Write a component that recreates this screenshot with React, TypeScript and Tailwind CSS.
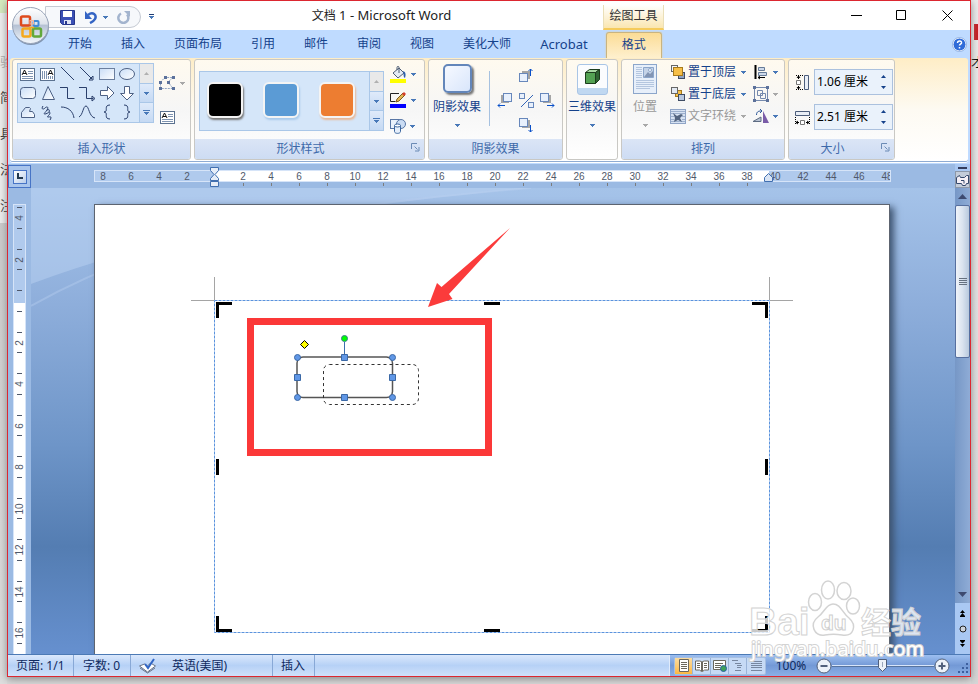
import React, { useState } from "react";
import clsx from "clsx";

const tabs = ["开始", "插入", "页面布局", "引用", "邮件", "审阅", "视图", "美化大师"];

const shapes: { name: string; node: React.ReactNode }[] = [
  { name: "文本框", node: <LinedBox /> },
  { name: "竖排文本框", node: <LinedBox vertical /> },
  { name: "直线", node: <path d="M2 2l13 13" /> },
  { name: "箭头", node: <path d="M2 2l12 12M15 11v4h-4z" /> },
  { name: "矩形", node: <rect x="1.5" y="3.5" width="15" height="11" fill="url(#shapeFill)" stroke="#6b7f9f" /> },
  { name: "椭圆", node: <ellipse cx="9" cy="9" rx="7.5" ry="5.5" fill="url(#shapeFill)" stroke="#4d6185" /> },
  { name: "圆角矩形", node: <rect x="1.5" y="3.5" width="15" height="11" rx="3" fill="url(#shapeFill)" stroke="#4d6185" /> },
  { name: "三角形", node: <path d="M9 2.5L3.5 15.500h12z" fill="url(#shapeFill)" stroke="#4d6185" /> },
  { name: "肘形连接符", node: <path d="M1 3.500h7.500v11h7" /> },
  { name: "肘形箭头", node: <path d="M1 3.500h7.500v11h7M14 12l3 2.500l-3 2.500z" /> },
  { name: "右箭头", node: <path d="M2.500 6.500h7v-4l6.500 6.500l-6.500 6.500v-4h-7z" fill="#fff" stroke="#4d6185" /> },
  { name: "下箭头", node: <path d="M6.500 2.500v7h-4l6.500 6.500l6.500-6.500h-4v-7z" fill="#fff" stroke="#4d6185" /> },
  { name: "任意多边形", node: <path d="M2.500 14.500v-5l4-5h4l1 1l-1 3h3l2 3v3z" fill="url(#shapeFill)" stroke="#4d6185" /> },
  { name: "自由曲线", node: <path d="M4 3c-2 3 0 4 2 2s4-1 2 2s-4 4-2 4s5-3 5-1s-4 4-2 4s3-1 3 1l-1 2M8 7c2-1 3 0 2 2" /> },
  { name: "弧形", node: <path d="M2 4c7 0 12 4 13 11" /> },
  { name: "曲线", node: <path d="M1 14C5 12 5 3 8 3s3 11 9 12" /> },
  { name: "左大括号", node: <path d="M12 2c-7 0-1 7-6 7c5 0-1 7 6 7" /> },
  { name: "右大括号", node: <path d="M6 2c7 0 1 7 6 7c-5 0 1 7-6 7" /> },
];

const swatches = [
  { name: "黑色", color: "bg-black", shadow: "shadow-[1px_2px_2px_#777]" },
  { name: "蓝色", color: "bg-[#5b9bd5]", shadow: "shadow-[1px_2px_2px_#a9cbec]" },
  { name: "橙色", color: "bg-[#ed7d31]", shadow: "shadow-[1px_2px_2px_#e8b999]" },
];

function LinedBox({ vertical }: { vertical?: boolean }) {
  return (
    <>
      <rect x="1.500" y="3.500" width="14" height="12" fill="#fff" stroke="#5b7290" />
      {vertical ? (
        <>
          <path d="M3.500 6v8M5.500 6v8M7.500 6v8M9.500 11v3M11.500 11v3M13.500 11v3" stroke="#7e93b0" />
          <path d="M9 10l2.500-5l2.500 5M10 8.500h3" stroke="#111" />
        </>
      ) : (
        <>
          <path d="M9 6.500h5M9 8.500h5M3 11.500h11M3 13.500h11" stroke="#7e93b0" />
          <path d="M3 10l2.500-5l2.500 5M4 8.500h3" stroke="#111" />
        </>
      )}
    </>
  );
}

const Icon = ({ size = 16, children }: { size?: number; children: React.ReactNode }) => (
  <svg width={size} height={size} viewBox={`0 0 ${size} ${size}`} fill="none" stroke="#2a3f6b" className="shrink-0">
    {children}
  </svg>
);

const Caret = ({ off }: { off?: boolean }) => (
  <svg width="5" height="3" viewBox="0 0 5 3" shapeRendering="crispEdges" className={clsx("shrink-0", off ? "fill-[#a8a8a8]" : "fill-[#4878b8]")}>
    <path d="M0 0h5v1H4v1H3v1H2V2H1V1H0z" />
  </svg>
);

const Group = ({
  title,
  className,
  launcher,
  children,
}: {
  title?: string;
  className: string;
  launcher?: boolean;
  children: React.ReactNode;
}) => (
  <section
    className={clsx(
      "flex h-[101px] shrink-0 flex-col overflow-hidden rounded-[3px] border border-[#c9c8c4] bg-linear-to-b from-[#fffaef] via-[#f6f6f6] to-white",
      className
    )}
  >
    <div className="flex flex-1">{children}</div>
    {title && (
      <div
        className={clsx(
          "relative flex h-5 items-center justify-center bg-linear-to-b from-[#dbe5f6] to-[#cddcf3] text-[#3e6aaa]",
          launcher && "pr-[18px]"
        )}
      >
        {title}
        {launcher && (
          <button aria-label={`${title}选项`} className="absolute top-1 right-1">
            <svg width="9" height="9" viewBox="0 0 9 9" fill="none" stroke="#6b8bb5" className="block">
              <path d="M.5 6V.5H6M3.500 3.500l3 3M8 4v4H4" />
            </svg>
          </button>
        )}
      </div>
    )}
  </section>
);

const GalleryScroll = () => (
  <div className="flex w-[14px] flex-col divide-y divide-[#aac7e8] border-l border-[#aac7e8]">
    <button aria-label="上一行" className="flex flex-1 items-center justify-center bg-[#e9e9e9]">
      <svg width="5" height="3" fill="#b0b0b0"><path d="M0 3h5L2.500 0z" /></svg>
    </button>
    <button aria-label="下一行" className="flex flex-1 items-center justify-center bg-linear-to-b from-[#dfeafa] to-[#c5d9f3]">
      <Caret />
    </button>
    <button aria-label="其他" className="flex flex-1 flex-col items-center justify-center gap-px bg-linear-to-b from-[#dfeafa] to-[#c5d9f3]">
      <span className="h-px w-[7px] bg-[#4878b8]" />
      <Caret />
    </button>
  </div>
);

const SplitButton = ({ label, off, text, children }: { label: string; off?: boolean; text?: boolean; children: React.ReactNode }) => (
  <button aria-label={label} className="flex items-center">
    {children}
    {text && <span className={clsx("ml-[2px] mr-[5px]", off ? "text-[#999]" : "text-[#15428b]")}>{label}</span>}
    {!text && <span className="w-1" />}
    <Caret off={off} />
  </button>
);

const Nudge = ({ label, turn }: { label: string; turn: "up" | "down" | "left" | "right" }) => {
  const arrow = {
    up: "M12.500 9V2M10.500 4l2-2l2 2",
    down: "M12.500 8v7M10.500 13l2 2l2-2",
    left: "M8 13.500H1M3 11.500l-2 2l2 2",
    right: "M8 13.500h7M13 11.500l2 2l-2 2",
  }[turn];
  const x = turn === "left" ? 6 : 1;
  const y = turn === "up" ? 6 : 1;
  return (
    <button aria-label={label}>
      <Icon>
        <rect x={turn === "left" ? x - 2 : x + 3} y={turn === "up" ? y - 2 : y + 2} width="8" height="8" fill="#a5a5a5" stroke="none" />
        <rect x={x + 0.5} y={y + 0.5} width="8" height="8" fill="#e8f0fc" stroke="#6787bb" />
        <path d={arrow} stroke="#0a50c8" />
      </Icon>
    </button>
  );
};

const SizeField = ({ id, label, value, onChange, children }: { id: string; label: string; value: string; onChange: (v: string) => void; children: React.ReactNode }) => (
  <div className="flex items-center gap-[3px]">
    <label htmlFor={id} aria-label={label}>{children}</label>
    <div className="flex h-[26px] w-[79px] items-center border border-[#abc1de] bg-[#eaf2fb] pr-[6px]">
      <input id={id} value={value} onChange={(e) => onChange(e.target.value)} className="w-full min-w-0 bg-transparent pl-[2px] text-black outline-none" />
      <div className="flex flex-col gap-2 text-[#15428b]">
        <button aria-label={`增加${label}`}><svg width="5" height="3" fill="currentColor" className="block"><path d="M0 3h5L2.500 0z" /></svg></button>
        <button aria-label={`减小${label}`}><svg width="5" height="3" fill="currentColor" className="block"><path d="M0 0h5L2.500 3z" /></svg></button>
      </div>
    </div>
  </div>
);

const TitleBar = () => (
  <header className="relative flex h-[29px] shrink-0 bg-white">
    <div className="w-[152px] pt-[5px] pl-[37px]">
      <div className="flex h-[22px] w-[96px] items-center gap-[9px] rounded-r-full border border-[#c5cad3] bg-[#f6f8fb] pl-[14px]">
        <button aria-label="保存">
          <Icon size={15}>
            <path d="M.5.5h14v14h-12l-2-2z" fill="#3b50b5" stroke="#27378c" />
            <path d="M3 1h9v6H3z" fill="#fff" stroke="none" />
            <path d="M4 10h7v4H4z" fill="#dfe4f5" stroke="none" />
            <path d="M5 11h2v3H5z" fill="#27378c" stroke="none" />
          </Icon>
        </button>
        <button aria-label="撤消" className="flex items-center gap-[5px]">
          <Icon size={14}>
            <path d="M4 5c5-4 9 0 7 4c-1 2-3 3-5 4" stroke="#3464c4" strokeWidth="2.500" />
            <path d="M1 1v8h7z" fill="#3464c4" stroke="none" />
          </Icon>
          <Caret />
        </button>
        <button aria-label="恢复">
          <Icon size={14}>
            <path d="M4 3.500a5 5 0 1 0 6 1" stroke="#a3b4ce" strokeWidth="2.500" />
            <path d="M7 1h6v6z" fill="#a3b4ce" stroke="none" />
          </Icon>
        </button>
      </div>
      <button aria-label="自定义快速访问工具栏" className="absolute top-[13px] left-[141px] flex flex-col items-center gap-px">
        <span className="h-px w-[5px] bg-[#1f3c74]" />
        <Caret />
      </button>
    </div>
    <h1 className="w-[443px] pt-[2px] text-center text-[13px] leading-6 text-[#222]">
      <span className="text-[12px]">文档</span> 1 - Microsoft Word
    </h1>
    <div className="mt-1 w-[61px] border-x border-b-2 border-x-[#eadfb8] border-b-[#f5cb5c] bg-linear-to-b from-white to-[#fae6b0] text-center leading-[22px] text-[#333]">
      绘图工具
    </div>
    <div className="flex-1" />
    <div className="flex">
      <button aria-label="最小化" className="grid w-[46px] place-items-center"><Icon size={11}><path d="M0 5.500h11" stroke="#000" /></Icon></button>
      <button aria-label="最大化" className="grid w-[45px] place-items-center"><Icon size={11}><path d="M.5.5h9v9h-9z" stroke="#000" /></Icon></button>
      <button aria-label="关闭" className="grid w-[46px] place-items-center"><Icon size={11}><path d="M.5.5l10 10M10.500.5l-10 10" stroke="#000" /></Icon></button>
    </div>
    <button aria-label="Office 按钮" className="absolute top-[5px] left-1 z-10">
      <svg width="38" height="40" viewBox="0 0 38 40" fill="none">
        <defs>
          <linearGradient id="orb" x1="0" y1="0" x2="0" y2="1">
            <stop offset="0" stopColor="#fff" />
            <stop offset=".45" stopColor="#dfe4ec" />
            <stop offset=".5" stopColor="#b6c2d4" />
            <stop offset="1" stopColor="#f4f8fd" />
          </linearGradient>
        </defs>
        <circle cx="19" cy="21" r="18" fill="#4d5a70" opacity=".55" />
        <circle cx="18.500" cy="19.500" r="18" fill="url(#orb)" stroke="#97a3b8" />
        <rect x="9" y="10.500" width="9" height="9" rx="1.500" stroke="#df4a1c" strokeWidth="2.500" />
        <rect x="21.500" y="15" width="5" height="5" rx="1" stroke="#3f8bd8" strokeWidth="2" />
        <rect x="10.500" y="22.500" width="8" height="8" rx="1.500" stroke="#f5a81c" strokeWidth="2.500" />
        <rect x="21" y="22.500" width="8" height="8" rx="1.500" stroke="#62a83a" strokeWidth="2.500" />
        <rect x="18" y="14.500" width="3.500" height="3.500" stroke="#f2b59c" />
        <path d="M17 21.500h5" stroke="#f5a81c" strokeWidth="1.500" />
      </svg>
    </button>
  </header>
);

const Tabs = () => (
  <nav className="flex h-7 shrink-0 bg-[#bfdbff] pl-[60px] text-[#15428b]">
    <div className="flex items-center gap-[29px]">
      {tabs.map((tab) => (
        <button key={tab}>{tab}</button>
      ))}
      <button className="text-[13px]">Acrobat</button>
    </div>
    <button className="mt-[2px] ml-[18px] w-[56px] rounded-t-[3px] border border-b-0 border-[#c9b480] bg-linear-to-b from-[#fbdc95] to-[#fef0ce] pb-[2px] shadow-[0_0_2px_#e7cf8c]">格式</button>
    <button aria-label="帮助" className="mr-[3px] ml-auto">
      <svg width="15" height="15" viewBox="0 0 15 15">
        <circle cx="7.500" cy="7.500" r="6.500" fill="#2f6bd8" stroke="#fff" />
        <circle cx="7.500" cy="7.500" r="7" fill="none" stroke="#7c9fd6" strokeWidth=".7" />
        <path d="M5.500 6c0-3 4.500-2.500 4 0c-.3 1.200-2 1-2 2.500M7.500 10v1.500" fill="none" stroke="#fff" strokeWidth="1.500" />
      </svg>
    </button>
  </nav>
);

const StackIcon = ({ back }: { back?: boolean }) => (
  <Icon>
    <rect x="1.500" y="1.500" width="6" height="6" fill="#f5f7fa" stroke="#666" />
    <rect x="8.500" y="8.500" width="6" height="6" fill="#8fa2c2" stroke="#3f4c63" />
    {back ? (
      <>
        <rect x="5.500" y="4.500" width="6" height="6" fill="#f6bf47" stroke="#a77a1b" />
        <rect x="1.500" y="1.500" width="6" height="6" fill="#e3e9f2" stroke="#666" />
        <rect x="8.500" y="8.500" width="6" height="6" fill="#b9c8df" stroke="#3f4c63" />
      </>
    ) : (
      <rect x="3.500" y="3.500" width="9" height="8" fill="#f6bf47" stroke="#a77a1b" />
    )}
  </Icon>
);

const Ribbon = () => {
  const [height, setHeight] = useState("1.06 厘米");
  const [width, setWidth] = useState("2.51 厘米");

  return (
    <div className="shrink-0 bg-[#bfdbff] px-[2px] pb-[2px]">
      <div className="flex h-[104px] gap-[3px] overflow-hidden rounded-[3px] border-b border-[#8fabd2] bg-linear-to-b from-[#feedc6] via-[#fdfaf2] to-white pt-[1px] pl-[2px] shadow-[0_1px_0_#fff]">
        <Group title="插入形状" className="w-[179px]">
          <div className="mt-[3px] ml-1 flex h-[60px] w-[137px] border border-[#aac7e8] bg-[#d5e6f9]">
            <div className="grid flex-1 grid-cols-6 grid-rows-3 place-items-center pr-[2px]">
              {shapes.map((s) => (
                <button key={s.name} aria-label={s.name}>
                  <Icon size={18}>{s.node}</Icon>
                </button>
              ))}
            </div>
            <GalleryScroll />
          </div>
          <div className="mt-[15px] ml-[5px] flex flex-col gap-4">
            <SplitButton label="编辑形状" off>
              <Icon size={17}>
                <path d="M1.500 13.500V7L6 2.500h8L9 7l5 6.500z" stroke="#8fa3c2" strokeDasharray="2 1" />
                <path d="M0 12h3v3H0zM0 6h3v3H0zM5 1h3v3H5zM13 1h3v3h-3zM8 6h3v3H8zM13 12h3v3h-3z" fill="#5b719b" stroke="none" />
              </Icon>
            </SplitButton>
            <button aria-label="编辑文本"><Icon size={17}><LinedBox /></Icon></button>
          </div>
        </Group>

        <Group title="形状样式" className="w-[231px]" launcher>
          <div className="mt-[11px] ml-1 flex h-[60px] w-[185px] border border-[#aac7e8] bg-[#d5e6f9]">
            <div className="flex flex-1 items-center gap-5 pb-[2px] pl-[7px]">
              {swatches.map((s) => (
                <button key={s.name} aria-label={s.name} className={clsx("size-9 rounded-md border-2 border-[#f4f4f4]", s.color, s.shadow)} />
              ))}
            </div>
            <GalleryScroll />
          </div>
          <div className="mt-[6px] ml-[6px] flex flex-col gap-[9px]">
            <SplitButton label="形状填充">
              <Icon size={17}>
                <path d="M3 7l6-5l5 5l-6 5z" fill="#e4ebf4" stroke="#4d5c74" />
                <path d="M9 7V1.500c0-1.500-2-1.500-2 0V4" stroke="#4d5c74" />
                <path d="M13 5c3 1 3 4 2 7c-2-1-1-4-2-7z" fill="#2f62ad" stroke="none" />
                <path d="M0 13h16v4H0z" fill="#ff0" stroke="none" />
              </Icon>
            </SplitButton>
            <SplitButton label="形状轮廓">
              <Icon size={17}>
                <path d="M9 1.500H.5v8h5" stroke="#222" />
                <path d="M6 10l1-3l6-6l2 2l-6 6z" fill="#e2b653" stroke="#7d5c20" />
                <path d="M12 2l2-2l2 2l-2 2z" fill="#d53d2b" stroke="none" />
                <path d="M0 12h16v4H0z" fill="#00f" stroke="none" />
              </Icon>
            </SplitButton>
            <SplitButton label="更改形状">
              <Icon size={16}>
                <rect x=".5" y="1.500" width="9" height="9" fill="#eaf2fc" stroke="#5876a5" />
                <circle cx="11" cy="6" r="4.500" fill="#cadcf4" stroke="#5876a5" />
                <path d="M4.500 7.500v6c0 2.500 6 2.500 6 0v-6" fill="#e6effb" stroke="#3a659e" />
                <ellipse cx="7.500" cy="7.500" rx="3" ry="1.500" fill="#fff" stroke="#3a659e" />
              </Icon>
            </SplitButton>
          </div>
        </Group>

        <Group title="阴影效果" className="w-[135px]">
          <button className="flex w-14 flex-col items-center pt-[4px] text-[#15428b]">
            <span className="size-[29px] rounded-[5px] border-2 border-[#6386ba] bg-linear-to-br from-[#f6f9ff] to-[#d9e6fb] shadow-[2px_2px_2px_#777]" />
            <span className="mt-[5px] mb-2 leading-[18px] whitespace-nowrap">阴影效果</span>
            <Caret />
          </button>
          <span className="mt-[11px] ml-1 h-[55px] w-px bg-[#a6c1e0]" />
          <div className="mt-[7px] ml-[7px] grid h-[66px] grid-cols-3 content-between gap-x-[5px]">
            <span />
            <Nudge label="略向上移" turn="up" />
            <span />
            <Nudge label="略向左移" turn="left" />
            <button aria-label="设置/取消阴影">
              <Icon>
                <rect x="1.500" y="1.500" width="5" height="5" fill="#e8f0fc" stroke="#6787bb" />
                <rect x="10.500" y="10.500" width="5" height="5" fill="#e8f0fc" stroke="#6787bb" />
                <path d="M15 3L3 15" stroke="#3466b8" />
              </Icon>
            </button>
            <Nudge label="略向右移" turn="right" />
            <span />
            <Nudge label="略向下移" turn="down" />
          </div>
        </Group>

        <Group className="w-[52px]">
          <button className="flex w-full flex-col items-center pt-[4px] text-[#15428b]">
            <span className="grid h-[31px] w-[31px] justify-center rounded-[3px] border border-[#a9c5e6] bg-[linear-gradient(#fbfcfe_23px,#c0d8f1_23px)] pt-1">
              <svg width="15" height="15" viewBox="0 0 15 15" stroke="#1c3d1d">
                <path d="M.5 3.500h10v11H.5z" fill="#53a253" />
                <path d="M.5 3.500l4-3h10l-4 3z" fill="#a7d9a3" />
                <path d="M10.500 3.500l4-3v10l-4 4z" fill="#2d6531" />
              </svg>
            </span>
            <span className="mt-[3px] mb-2 leading-[18px] whitespace-nowrap">三维效果</span>
            <Caret />
          </button>
        </Group>

        <Group title="排列" className="w-[164px]">
          <button className="flex w-[46px] flex-col items-center pt-[4px] text-[#999]">
            <svg width="24" height="30" viewBox="0 0 24 30" fill="none" stroke="#8ca6cb">
              <rect x=".5" y=".5" width="23" height="29" fill="#e7effa" />
              <path d="M3 3.500h6M3 5.500h6M3 7.500h6M3 9.500h6M3 11.500h6M3 13.500h6M3 16.500h18M3 18.500h18M3 20.500h18M3 22.500h18M3 24.500h14" stroke="#b4c6df" />
              <path d="M10.500 3.500h10v10h-10z" fill="#c4d3e8" />
              <path d="M11 13l4-5l2 2l3-3v6z" fill="#8295b4" stroke="none" />
              <circle cx="17" cy="6" r="1.500" fill="#fff" />
            </svg>
            <span className="mt-1 mb-2 leading-[18px]">位置</span>
            <Caret off />
          </button>
          <div className="mt-[4px] ml-[2px] flex flex-col gap-[6px]">
            <SplitButton label="置于顶层" text><StackIcon /></SplitButton>
            <SplitButton label="置于底层" text><StackIcon back /></SplitButton>
            <SplitButton label="文字环绕" text off>
              <Icon>
                <rect x=".5" y="1.500" width="15" height="14" fill="#d7e2f2" stroke="#8fa4c6" />
                <path d="M1 3.500h14M1 5.500h14M1 13.500h14M1 8.500h3M12 8.500h3M1 11.500h3M12 11.500h3" stroke="#9db0cd" />
                <path d="M3 5l4 3l4-2l2 1l-3 3l2 4l-4-2l-4 2l1-4z" fill="#53647f" stroke="none" />
              </Icon>
            </SplitButton>
          </div>
          <div className="mt-[4px] ml-[7px] flex flex-col gap-[6px]">
            <SplitButton label="对齐">
              <Icon>
                <path d="M2.500 1v14" stroke="#000" strokeWidth="2" />
                <path d="M5.500 3.500h6v3h-6zM5.500 8.500h8v3h-8z" fill="#cdd9ea" stroke="#667b98" />
                <path d="M5 13.500h7M7 12l-2 1.500L7 15" stroke="#000" />
              </Icon>
            </SplitButton>
            <SplitButton label="组合" off>
              <Icon>
                <path d="M1.500 1.500h13v13h-13zM4.500 4.500h5v5h-5zM7.500 7.500h5v5h-5z" stroke="#7589ad" />
                <path d="M0 0h3v3H0zM13 0h3v3h-3zM0 13h3v3H0zM13 13h3v3h-3z" fill="#5c719a" stroke="none" />
              </Icon>
            </SplitButton>
            <SplitButton label="旋转">
              <Icon>
                <path d="M0 13.500L8 9v4.500z" fill="#b9c3d3" stroke="#5e6c83" />
                <path d="M10 3v12h6z" fill="#7a5ca8" stroke="none" />
                <path d="M3.500 7c0-4 3-4 5-4M7 1l2 2l-2 2" stroke="#2c5697" />
              </Icon>
            </SplitButton>
          </div>
        </Group>

        <Group title="大小" className="w-[107px]" launcher>
          <div className="mt-[9px] ml-[5px] flex flex-col gap-[9px]">
            <SizeField id="shape-height" label="高度" value={height} onChange={setHeight}>
              <Icon size={17}>
                <path d="M10.500 1.500h4v14h-4z" fill="#e9eef6" stroke="#4c5d7b" />
                <path d="M2 1.500h7M2 15.500h7" stroke="#000" strokeDasharray="1 1" />
                <path d="M4.500 2v3M4.500 12v3M3 4l1.500-2L6 4M3 13l1.500 2L6 13" stroke="#000" />
                <path d="M2.500 6.500h4v4h-4z" fill="#fff" stroke="#777" />
              </Icon>
            </SizeField>
            <SizeField id="shape-width" label="宽度" value={width} onChange={setWidth}>
              <Icon size={17}>
                <path d="M1.500 2.500h14v4h-14z" fill="#e9eef6" stroke="#4c5d7b" />
                <path d="M1.500 8v8M15.500 8v8" stroke="#000" strokeDasharray="1 1" />
                <path d="M2 13.500h3M12 13.500h3M4 12l-2 1.500L4 15M13 12l2 1.500l-2 1.500" stroke="#000" />
                <path d="M6.500 11.500h4v4h-4z" fill="#fff" stroke="#777" />
              </Icon>
            </SizeField>
          </div>
        </Group>
      </div>
    </div>
  );
};

const rulerUnits = [8, 6, 4, 2, 0, ...Array.from({ length: 24 }, (_, i) => (i + 1) * 2)];

const HorizontalRuler = () => (
  <div className="flex h-6 shrink-0 bg-[#9bbae3] font-['Liberation_Sans',sans-serif] text-[10px] text-[#50596b]">
    <button aria-label="制表符" className="mt-px grid w-[23px] place-items-center border border-[#4774c6] bg-[#a9c5ec]">
      <span className="grid size-[14px] place-items-center border border-[#4774c6] bg-linear-to-br from-white to-[#b9cdea]">
        <svg width="7" height="7" fill="none" stroke="#22384f" strokeWidth="2"><path d="M2 0v5h5" /></svg>
      </span>
    </button>
    <div className="flex flex-1 justify-center pt-[6px] pr-px">
      <div className="relative h-[18px] w-[797px]">
        <div className="h-3 overflow-hidden border border-[#d6e4f8] bg-[linear-gradient(90deg,#b0caed_120px,#fff_120px,#fff_674px,#b0caed_674px)]">
          <div className="-ml-[6px] flex w-[812px]">
            {rulerUnits.map((n, i) => (
              <span key={i} className="w-7 shrink-0 text-center leading-[11px]">{n || ""}</span>
            ))}
          </div>
        </div>
        <div className="flex pt-px pl-[135px]">
          {rulerUnits.slice(5, 24).map((n) => (
            <span key={n} className="flex w-7 shrink-0 justify-center"><span className="h-[3px] w-px bg-[#7c7c7c]" /></span>
          ))}
        </div>
        <svg className="absolute -top-[3px] left-[116px]" width="9" height="21" viewBox="0 0 9 21" fill="#e6edf8" stroke="#416fb0">
          <path d="M.5.5h8v3L5 7.500l3.500 4v2h-8v-2L4 7.500L.5 3.500z" />
          <path d="M.5 14.500h8v5h-8z" />
        </svg>
        <svg className="absolute top-[3px] left-[670px]" width="9" height="9" viewBox="0 0 9 9" fill="#d9e4f4" stroke="#416fb0">
          <path d="M.5 8.500V4.500l4-4l4 4v4z" />
        </svg>
      </div>
    </div>
    <div className="flex w-[15px] flex-col items-center bg-[#a9c8f3]">
      <span className="mt-[3px] h-[2px] w-[9px] shrink-0 bg-[#333c5c]" />
      <button aria-label="标尺" className="mt-[2px] grid w-full flex-1 place-items-center border border-[#8d98a8] bg-[#c3ccd9]">
        <svg width="13" height="12" viewBox="0 0 13 12" fill="#f5f0f6" stroke="#35496d">
          <path d="M.5 3.500l3-2l1 2h4l2-2h2v8h-2l-1 2h-3l-1-2h-5z" />
          <path d="M5 6.500h3v3" fill="none" />
        </svg>
      </button>
    </div>
  </div>
);

const VerticalRuler = () => (
  <div className="w-[23px] shrink-0 overflow-hidden bg-[#9bbae3] pt-4 pl-[5px]">
    <div className="h-full w-[13px] overflow-hidden border-x border-t border-[#d6e4f8] bg-[linear-gradient(#b0caed_98px,#fff_98px)] font-['Liberation_Sans',sans-serif] text-[10px] text-[#50596b]">
      <div className="-mt-2">
        {[4, 2, 0, 2, 4, 6, 8, 10, 12, 14, 16].map((n, i) => (
          <div key={i} className="flex h-[42px] flex-col items-center justify-between py-[10px] even:h-[41px]">
            <span className="h-px w-[5px] shrink-0 bg-[#50596b]" />
            <span className="grid h-4 place-items-center"><span className="-rotate-90 leading-none">{n || ""}</span></span>
            <span className="h-px w-[5px] shrink-0 bg-[#50596b]" />
          </div>
        ))}
      </div>
    </div>
  </div>
);

// drawing canvas with the selected shape, its shadow outline and the callout
const Drawing = () => (
  <svg width="794" height="450" viewBox="95 205 794 450" fill="none" className="block">
    <path d="M214.500 277v23M191 300.500h23M769.500 277v23M770 300.500h23" stroke="#a5a5a5" />
    <path d="M214.500 300.500h555v332h-555z" stroke="#5b93dd" strokeDasharray="3 1" />
    <path
      d="M217.500 318v-14.500h14.500M752 303.500h14.500v14.500M217.500 616v14.500H232M752 630.500h14.500V616M484 303.500h16M484 630.500h16M217.500 459v16M766.500 459v16"
      stroke="#000"
      strokeWidth="3"
    />
    <rect x="250.500" y="321.500" width="238" height="131" stroke="#fb3838" strokeWidth="7" />
    <path d="M510 228L449 294l3.500 5L428 307l9-24l4.500 4z" fill="#fb3b3b" />
    <rect x="297" y="357" width="95.500" height="40.500" rx="6" stroke="#555" strokeWidth="1.500" />
    <rect x="323.500" y="364.500" width="95" height="40" rx="6" stroke="#333" strokeDasharray="3 3" />
    <path d="M344.500 342v12" stroke="#3c6eae" />
    <circle cx="344.500" cy="338.500" r="3" fill="#0f0" stroke="#3c7a8e" />
    <path d="M304.500 340.500l4 4l-4 4l-4-4z" fill="#ff0" stroke="#000" />
    <g fill="#6097e6" stroke="#3b68a6">
      <circle cx="297.500" cy="357.500" r="3" />
      <circle cx="392.500" cy="357.500" r="3" />
      <circle cx="297.500" cy="397.500" r="3" />
      <circle cx="392.500" cy="397.500" r="3" />
      <path d="M341.500 354.500h6v6h-6zM341.500 394.500h6v6h-6zM294.500 374.500h6v6h-6zM389.500 374.500h6v6h-6z" />
    </g>
  </svg>
);

const ScrollBar = () => (
  <div className="flex w-[15px] shrink-0 flex-col items-center bg-[#a9c8f3]">
    <div className="flex min-h-0 w-full flex-1 flex-col bg-linear-to-r from-[#7697c6] to-[#8facd6]">
      <button aria-label="向上滚动" className="grid h-[17px] shrink-0 place-items-center"><svg width="9" height="5" fill="#3d4a70"><path d="M0 5h9L4.500 0z" /></svg></button>
      <div className="grid h-[153px] place-items-center rounded-[2px] border border-[#566f9f] bg-linear-to-r from-[#f0f4f9] via-[#dae3ef] to-[#b8c9dd]">
        <span className="h-2 w-2 bg-[repeating-linear-gradient(#65707f_0_1px,transparent_1px_2px)]" />
      </div>
      <button aria-label="向下滚动" className="mt-auto grid h-[17px] shrink-0 place-items-center"><svg width="9" height="5" fill="#3d4a70"><path d="M0 0h9L4.500 5z" /></svg></button>
    </div>
    <div className="flex h-[51px] shrink-0 flex-col items-center justify-evenly">
      <button aria-label="前一页"><svg width="7" height="7" className="block"><path d="M1 3h5L3.500 0zM1 6h5L3.500 3zM1 6h5v1H1z" /></svg></button>
      <button aria-label="选择浏览对象"><svg width="8" height="8" className="block"><circle cx="4" cy="4" r="3" fill="#ccd3dd" stroke="#222" /></svg></button>
      <button aria-label="下一页"><svg width="7" height="7" className="block"><path d="M1 0h5v1L3.500 3.500L1 1zM1 4h5L3.500 7z" /></svg></button>
    </div>
  </div>
);

const views = [
  { name: "页面视图", d: "M3.500 1.500h9v12h-9zM5 4.500h6M5 6.500h6M5 8.500h6M5 10.500h6" },
  { name: "阅读版式视图", d: "M7.500 3.500v10l-2-1.500h-4v-9h4zM8.500 3.500v10l2-1.500h4v-9h-4zM3 5.500h3M3 7.500h3M3 9.500h3M10 5.500h3M10 7.500h3M10 9.500h3" },
  { name: "Web 版式视图", d: "M1.500 2.500h12v9h-12zM3 5.500h8M3 7.500h6M3 9.500h5" },
  { name: "大纲视图", d: "M2 2.500h6M5 5.500h6M7 7.500h5M7 9.500h4M5 12.500h6" },
  { name: "普通视图", d: "M2 3.500h11M2 5.500h11M2 7.500h11M2 9.500h11M2 12.500h11" },
];

const StatusBar = () => (
  <footer className="flex h-[22px] shrink-0 items-stretch border-t border-[#4c7ab5] bg-linear-to-b from-[#dbe8fc] via-[#b6d1f6] to-[#cfe1fa] leading-5 whitespace-nowrap text-[#0f2a60]">
    <button className="w-[66px] border-r border-[#88a8d6] pl-2 text-left">页面: 1/1</button>
    <button className="w-[57px] border-r border-[#88a8d6] pl-[9px] text-left">字数: 0</button>
    <div className="flex w-[142px] items-center border-r border-[#88a8d6] pl-2">
      <button aria-label="校对">
        <svg width="17" height="16" viewBox="0 0 17 16" stroke="#687387">
          <path d="M.5 8l5-2l3 2l3-3l5 3l-8 6z" fill="#fff" />
          <path d="M1 10l7.500 5L16 10" fill="none" />
          <path d="M6 6l3 4l6-9" fill="none" stroke="#3166c6" strokeWidth="2" />
        </svg>
      </button>
      <button className="ml-4">英语(美国)</button>
    </div>
    <button className="w-[42px] border-r border-[#88a8d6] pl-[8px] text-left">插入</button>
    <div className="ml-auto flex items-center border-l border-[#e0ebfb] bg-linear-to-b from-[#9dbff0] via-[#7399d6] to-[#8bb0e6] pr-px pl-1">
      <div className="flex h-[18px] divide-x divide-[#9ab4d8] rounded-[2px] border border-[#a6bfe2] bg-[#c6daf5]">
        {views.map((v, i) => (
          <button key={v.name} aria-label={v.name} className={clsx("grid w-[18px] place-items-center", i === 0 && "bg-linear-to-b from-[#fbdc9f] to-[#fcb83e]")}>
            <Icon size={15}>
              <path d={v.d} fill={i < 3 ? "#fff" : "none"} stroke={i < 3 ? "#6b675c" : "#7787a0"} />
              {i === 2 && <circle cx="11.500" cy="10.500" r="3" fill="#3fa15b" stroke="#2761a0" />}
            </Icon>
          </button>
        ))}
      </div>
      <button className="w-[50px] text-center">100%</button>
      <button aria-label="缩小">
        <svg width="16" height="16" fill="#edf2f9" stroke="#52617c"><circle cx="8" cy="8" r="7" /><path d="M4.500 8h7" strokeWidth="2" /></svg>
      </button>
      <div className="relative h-4 w-[102px]">
        <svg width="102" height="16" viewBox="0 0 102 16" className="block">
          <path d="M0 7.500h102" stroke="#d7e5fa" />
          <path d="M0 8.500h102" stroke="#58749e" />
          <path d="M46.500 1.500h8v8l-4 4l-4-4z" fill="#edf2f8" stroke="#4f5f7c" />
          <path d="M50.500 4v5" stroke="#9aa6ba" />
        </svg>
        <input type="range" aria-label="显示比例" defaultValue={50} className="absolute inset-0 w-full opacity-0" />
      </div>
      <button aria-label="放大">
        <svg width="16" height="16" fill="#edf2f9" stroke="#52617c"><circle cx="8" cy="8" r="7" /><path d="M4.500 8h7M8 4.500v7" strokeWidth="2" /></svg>
      </button>
      <svg width="11" height="12" fill="#3c5f9e" className="mt-[6px] ml-2">
        <path d="M8 0h2v2H8zM4 4h2v2H4zM8 4h2v2H8zM0 8h2v2H0zM4 8h2v2H4zM8 8h2v2H8z" />
      </svg>
    </div>
  </footer>
);

const Watermark = () => (
  <svg width="180" height="84" viewBox="0 0 180 84" className="pointer-events-none absolute right-[45px] bottom-[15px] overflow-visible" fill="#fff" stroke="#d3d3d3" fillOpacity=".8">
    <g strokeWidth="1.500">
      <ellipse cx="70" cy="25" rx="6.500" ry="8.500" />
      <ellipse cx="83" cy="13" rx="6.500" ry="9" />
      <ellipse cx="99" cy="14" rx="7" ry="8.500" />
      <ellipse cx="108" cy="29" rx="6.500" ry="8" />
      <path d="M88 27c-7 0-9 9-15 13c-9 7-4 20 7 18c6-1 11-1 17 0c12 2 15-10 7-17c-7-5-8-14-16-14z" />
    </g>
    <g className="font-['Liberation_Sans','Noto_Sans_CJK_SC',sans-serif] font-bold">
      <text x="4" y="58" fontSize="39">Bai</text>
      <text x="76" y="53" fontSize="21" fill="#fff" stroke="#cfcfcf" strokeWidth="1">du</text>
      <text x="116" y="56" fontSize="30">经验</text>
    </g>
    <text x="6" y="79" fontSize="20" strokeWidth="2" paintOrder="stroke" fillOpacity="1" className="font-['Noto_Sans',sans-serif]">jingyan.baidu.com</text>
  </svg>
);

export default function App() {
  return (
    <div className="relative flex h-screen overflow-hidden bg-[#dadada] font-['Noto_Sans','Noto_Sans_CJK_SC',sans-serif] text-[12px] leading-4">
      <svg width="0" height="0" className="absolute">
        <defs>
          <linearGradient id="shapeFill" x1="0" y1="0" x2="1" y2="1">
            <stop offset="0" stopColor="#c9ddf6" />
            <stop offset="1" stopColor="#fff" />
          </linearGradient>
        </defs>
      </svg>

      <aside className="w-[7px] shrink-0 overflow-hidden bg-linear-to-b from-[#c4c4c4] to-[#dedede] text-[13px] text-[#333]">
        <div className="h-[13px] bg-[#d5ebbd]" />
        <div className="flex h-[210px] flex-col justify-end gap-5 bg-[#efefef] pb-[10px]">
          <span className="text-[#aaa]">验</span>
          <span>简</span>
          <span>具</span>
          <span>法</span>
          <span>注</span>
        </div>
      </aside>

      <main className="relative mb-[7px] flex min-w-0 flex-1 flex-col border border-[#dc2730] shadow-[0_2px_8px_#888]">
        <TitleBar />
        <Tabs />
        <Ribbon />
        <HorizontalRuler />
        <div className="flex min-h-0 flex-1">
          <VerticalRuler />
          <div className="relative flex min-w-0 flex-1 justify-center overflow-hidden bg-[linear-gradient(#a5c3e9,#8eaedb_25%,#6e95c8_55%,#547db2_77%,#6690cf)] pt-4 pr-[2px]">
            <svg width="500" height="150" className="absolute top-0 left-0" fill="none">
              <path d="M0 0h500C300 20 150 40 0 96z" fill="#bad2f1" opacity=".5" />
              <path d="M0 118C120 50 250 20 500 0" stroke="#b9d0f0" opacity=".4" strokeWidth="2" />
            </svg>
            <div className="relative w-[796px] shrink-0 border border-b-0 border-[#5d6470] bg-white shadow-[4px_3px_7px_#3d5370]">
              <Drawing />
            </div>
          </div>
          <ScrollBar />
        </div>
        <StatusBar />
        <Watermark />
      </main>

      <aside className="w-[7px] shrink-0 overflow-hidden bg-linear-to-b from-[#ededed] to-[#d6d6d6]">
        <div className="mt-6 h-4 w-full bg-linear-to-r from-[#eee] from-50% to-[#c61a1f] to-50%" />
        <div className="mt-[15px]">才</div>
      </aside>
    </div>
  );
}
